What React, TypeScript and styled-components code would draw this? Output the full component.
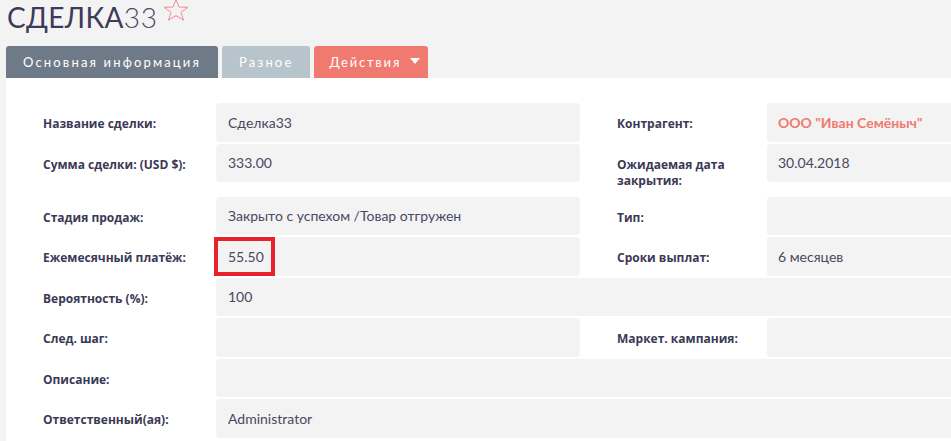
import React from "react";
import styled, { createGlobalStyle } from "styled-components";

const Global = createGlobalStyle`
  html, body {
    margin: 0;
    padding: 0;
    background: #f3f3f3;
    overflow: hidden;
    font-family: Lato, "Noto Sans", sans-serif;
  }
`;

const Page = styled.div`
  width: 967px;
  display: flex;
  flex-direction: column;
`;

const Header = styled.div`
  display: flex;
  align-items: flex-start;
  padding-left: 7px;
  height: 34px;
`;

const Title = styled.h1`
  margin: 0;
  font-size: 28px;
  line-height: 34px;
  font-weight: 400;
  color: #3d3b58;
  letter-spacing: 0.3px;
`;

const TitleNum = styled.span`
  font-weight: 300;
  color: #4a4866;
  letter-spacing: 0.8px;
`;

const StarButton = styled.span`
  display: inline-flex;
  margin-left: 5px;
  margin-top: -1px;
`;

const Tabs = styled.div`
  display: flex;
  align-items: flex-end;
  gap: 4px;
  margin: 12px 0 0 6px;
`;

const Tab = styled.div<{ $variant: "active" | "muted" | "action" }>`
  height: 32px;
  display: flex;
  align-items: center;
  gap: 9px;
  padding: 0 ${(p) => (p.$variant === "action" ? "8px" : "17px")} 0
    ${(p) => (p.$variant === "action" ? "15px" : "17px")};
  border-radius: 3px 3px 0 0;
  color: #ffffff;
  font-size: 13px;
  letter-spacing: ${(p) => (p.$variant === "action" ? "1.8px" : "2.15px")};
  background: ${(p) =>
    p.$variant === "active"
      ? "#6f7a88"
      : p.$variant === "muted"
      ? "#b7c4cb"
      : "#f07a6f"};
`;

const Caret = styled.span`
  width: 0;
  height: 0;
  border-left: 5px solid transparent;
  border-right: 5px solid transparent;
  border-top: 6px solid #ffffff;
  margin-top: -3px;
`;

const Panel = styled.div`
  margin-left: 6px;
  background: #ffffff;
  padding: 25px 0 8px;
  display: grid;
  grid-template-columns: 210px 364px 187px 200px;
  row-gap: 2px;
  align-content: start;
`;

const Label = styled.div`
  padding: 13px 12px 6px 37px;
  font-family: "Open Sans", Lato, sans-serif;
  font-size: 12px;
  line-height: 16px;
  font-weight: 700;
  color: #3b3955;
`;

const Field = styled.div<{ $span?: number; $pad?: number }>`
  position: relative;
  grid-column: span ${(p) => p.$span ?? 1};
  align-self: start;
  height: 38.5px;
  display: flex;
  align-items: center;
  padding-left: ${(p) => p.$pad ?? 12}px;
  background: #f3f3f3;
  border-radius: 4px;
  font-size: 14px;
  color: #4a4862;
`;

const Link = styled.span`
  font-weight: 700;
  color: #ef7a6e;
  font-size: 14px;
`;

const Highlight = styled.span`
  position: absolute;
  left: -2px;
  top: 0;
  width: 61px;
  height: 39px;
  box-sizing: border-box;
  border: 4px solid #e8222b;
  pointer-events: none;
`;

function Star() {
  return (
    <svg width="26" height="22" viewBox="0 0 26 22">
      <path
        d="M13 0.8 L16 8 L25 8.3 L18 13.3 L20.5 21.2 L13 16.6 L5.5 21.2 L8 13.3 L1 8.3 L10 8 Z"
        fill="none"
        stroke="#f3889a"
        strokeWidth="1"
        strokeLinejoin="round"
      />
    </svg>
  );
}

export default function App() {
  return (
    <Page>
      <Global />
      <Header>
        <Title>
          СДЕЛКА<TitleNum>33</TitleNum>
        </Title>
        <StarButton>
          <Star />
        </StarButton>
      </Header>
      <Tabs>
        <Tab $variant="active">Основная информация</Tab>
        <Tab $variant="muted">Разное</Tab>
        <Tab $variant="action">
          Действия
          <Caret />
        </Tab>
      </Tabs>
      <Panel>
        <Label>Название сделки:</Label>
        <Field>Сделка33</Field>
        <Label>Контрагент:</Label>
        <Field $pad={11}>
          <Link>ООО "Иван Семёныч"</Link>
        </Field>

        <Label>Сумма сделки: (USD $):</Label>
        <Field>333.00</Field>
        <Label>Ожидаемая дата закрытия:</Label>
        <Field $pad={11}>30.04.2018</Field>

        <Label>Стадия продаж:</Label>
        <Field>Закрыто с успехом /Товар отгружен</Field>
        <Label>Тип:</Label>
        <Field $pad={11} />

        <Label>Ежемесячный платёж:</Label>
        <Field>
          55.50
          <Highlight />
        </Field>
        <Label>Сроки выплат:</Label>
        <Field $pad={11}>6 месяцев</Field>

        <Label>Вероятность (%):</Label>
        <Field $span={3}>100</Field>

        <Label>След. шаг:</Label>
        <Field />
        <Label>Маркет. кампания:</Label>
        <Field $pad={11} />

        <Label>Описание:</Label>
        <Field $span={3} />

        <Label>Ответственный(ая):</Label>
        <Field $span={3}>Administrator</Field>
      </Panel>
    </Page>
  );
}
